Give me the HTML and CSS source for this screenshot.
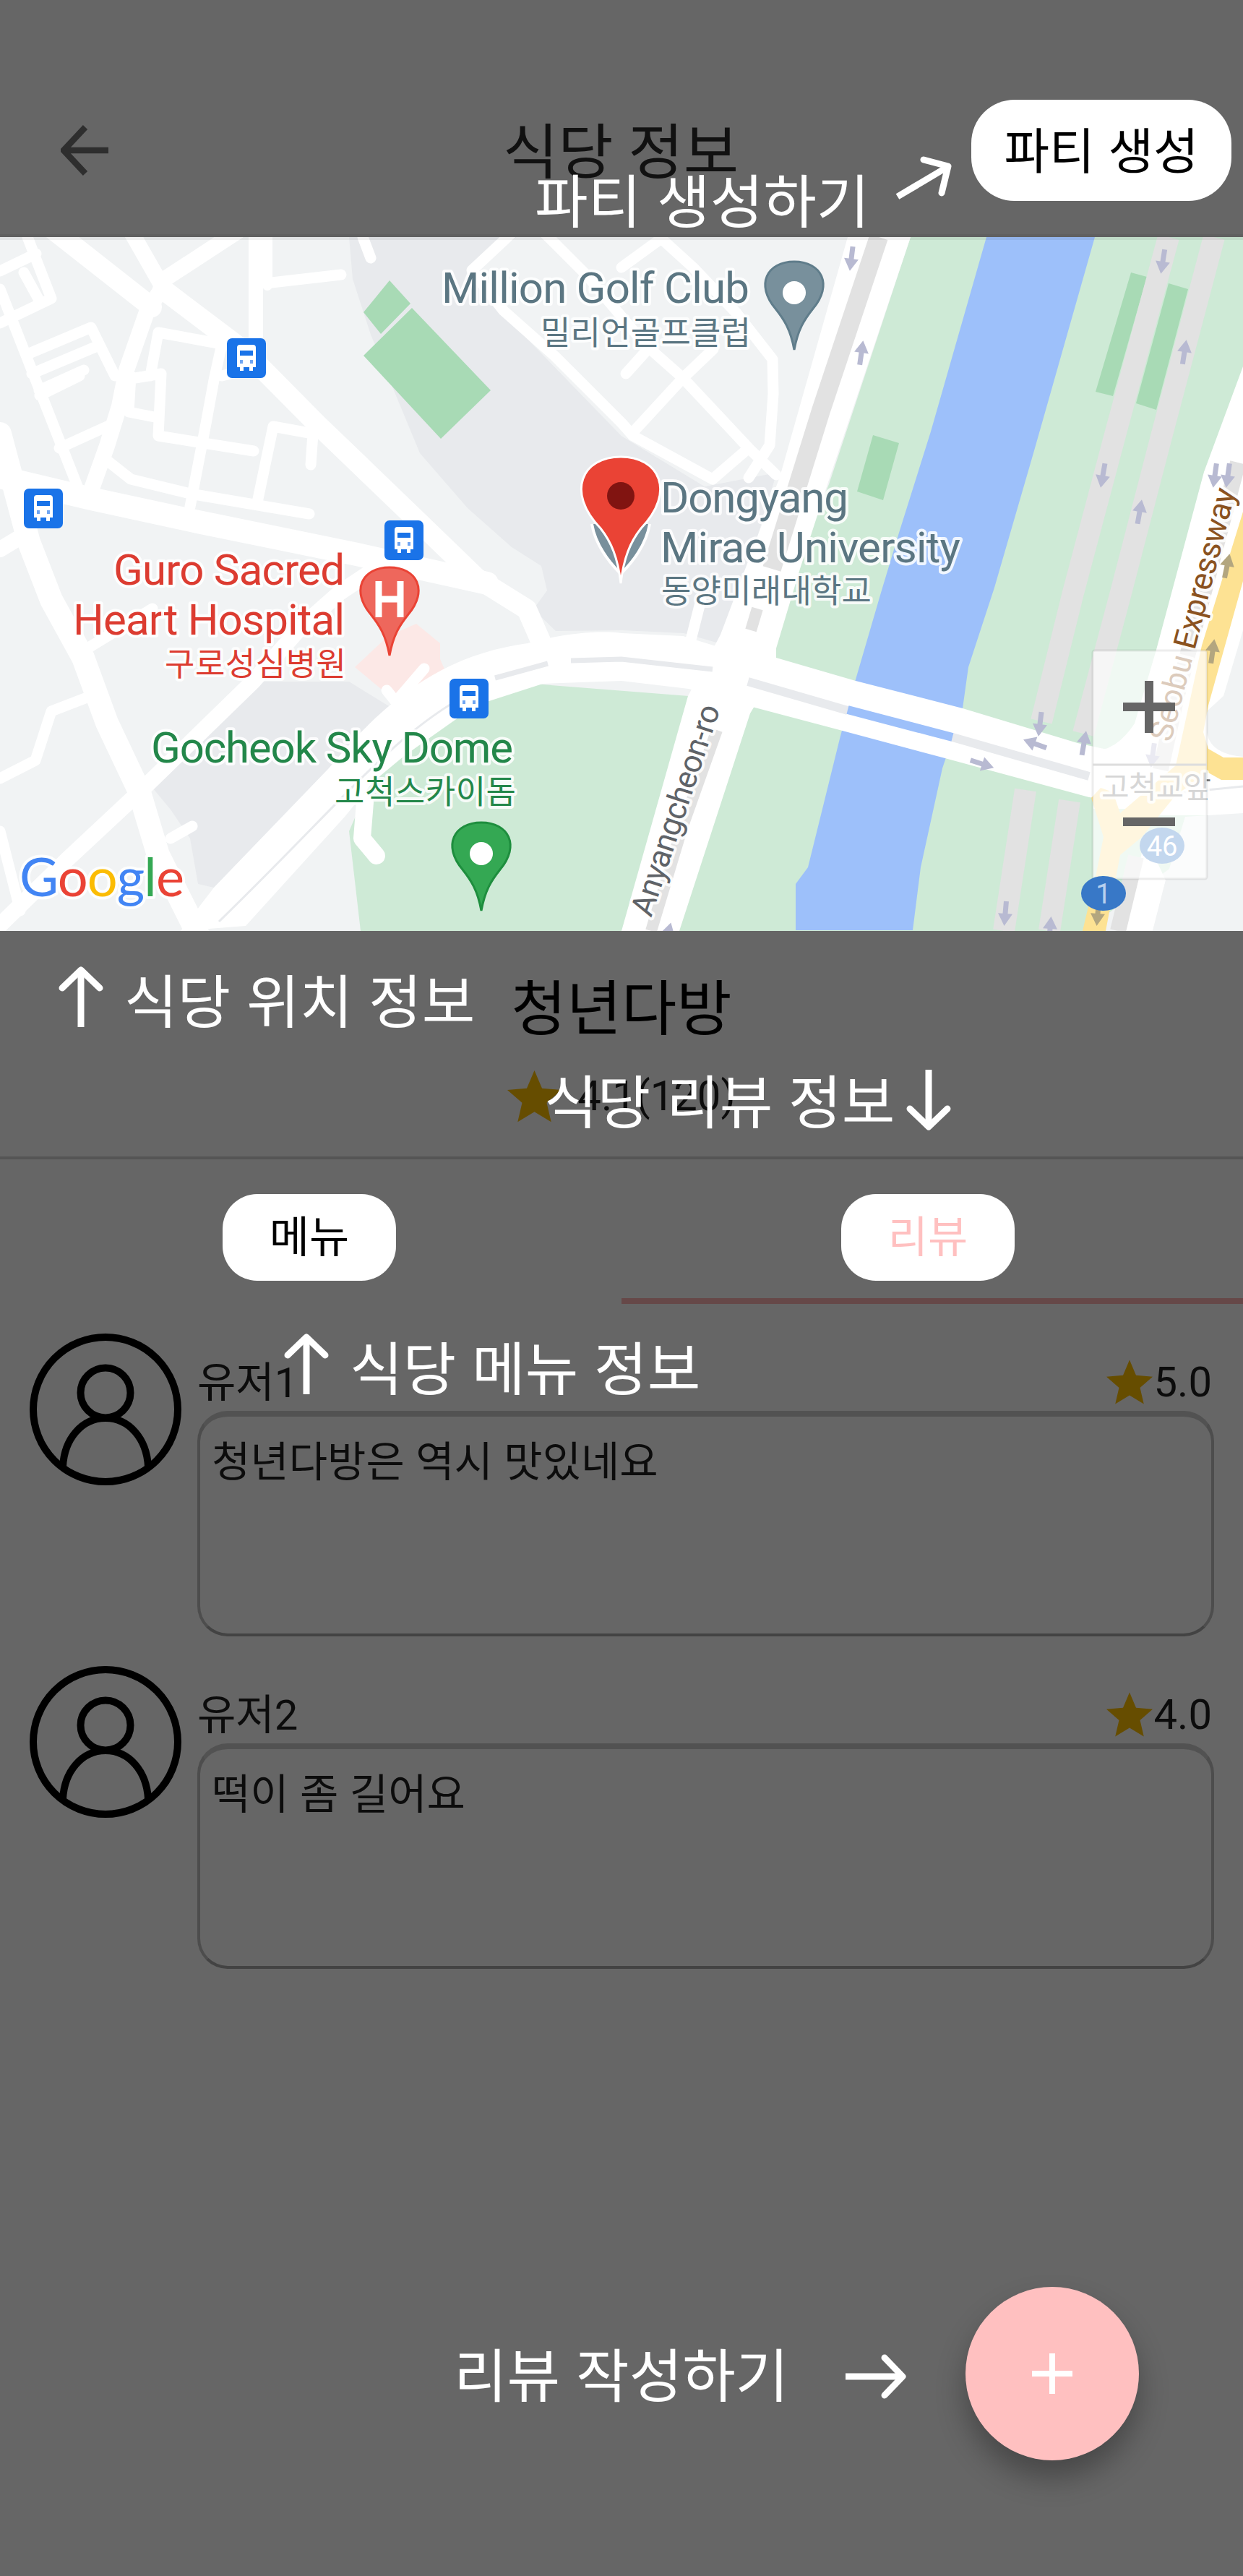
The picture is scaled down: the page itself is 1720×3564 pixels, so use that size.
FILE: index.html
```html
<!DOCTYPE html>
<html lang="ko">
<head>
<meta charset="utf-8">
<title>식당 정보</title>
<link rel="stylesheet" href="styles.css">
</head>
<body>
<svg class="defs" width="0" height="0">
  <defs>
    <symbol id="star" viewBox="2 2 20 19"><path d="M12 17.27 18.18 21l-1.64-7.03L22 9.24l-7.19-.61L12 2 9.19 8.63 2 9.24l5.46 4.73L5.82 21z"/></symbol>
    <symbol id="avatar" viewBox="0 0 212 212">
      <g fill="none" stroke="#000" stroke-width="10">
        <circle cx="106" cy="106" r="100"/>
        <circle cx="106" cy="83" r="34.5"/>
        <path d="M47 185c2-38 26-67 59-67s57 29 59 67"/>
      </g>
    </symbol>
    <symbol id="arrow-up" viewBox="0 0 64 84">
      <path d="M32 84V8" stroke-width="9"/>
      <path d="M6 30 32 5l26 25" stroke-width="9" stroke-linecap="round" stroke-linejoin="round"/>
    </symbol>
  </defs>
</svg>

<div class="screen">
  <header class="app-bar">
    <svg class="back" viewBox="0 0 66 72"><path d="M66 36H6M34 4 4 36l30 32" fill="none" stroke="#2e2e2e" stroke-width="8.500"/></svg>
    <h1 class="title">식당 정보</h1>
    <button class="party">파티 생성</button>
  </header>

  <svg class="map" viewBox="0 328 1720 960">
    <defs>
      <g id="bus">
        <rect width="54" height="55" rx="7" fill="#1a73e8"/>
        <path d="M14 13q0-4 4-4h18q4 0 4 4v27h-4v5h-5v-5h-8v5h-5v-5h-4z" fill="#fff"/>
        <path d="M18 17h18v7H18z" fill="#1a73e8"/>
        <path d="M18 30h4v5h-4zM32 30h4v5h-4z" fill="#6fa5f2"/>
      </g>
      <path id="dir" d="M-3.500 17V0H-10L0-17 10 0H3.500V17z"/>
      <path id="pin" d="M0 0C-5-28-14-42-26-57-54-90-38-122 0-122S54-90 26-57C14-42 5-28 0 0z" stroke-width="3"/>
    </defs>
    <rect y="328" width="1720" height="960" fill="#f1f3f4"/>

    <g fill="#e8eaed">
      <path d="M590 328h125l-65 50 45 55 165 170 115 70 100-20-30 100-50 137-49-14-85-4-92 1-31-30 19-26-8-34-41-26-61-54-66-76-68-164-25-77-12-140 51-13 49-27z"/>
      <path d="M351 943h132l60 37-88 83-159 165-22-5-11-63-27-40-25-30z"/>
    </g>
    <path d="M715 328L650 378l45 55 165 170 115 70 105-20 93-325z" fill="#f1f3f4"/>
    <path d="M576 863l33 27v22l8 18-52 35-38-12-36-30 46-43z" fill="#fce8e6"/>
    <g fill="#ceead6">
      <path d="M483 1150l16 138h380l74-325-253-20-170 100z"/>
      <path d="M1260 328h460v800l-220 160H930l90-300 127-318z"/>
    </g>
    <g fill="#a8dab5">
      <path d="M539 388l29 32-41 42-24-30zM570 426l109 114-69 67-107-115z"/>
      <path d="M1208 602l36 11-22 79-36-12zM1565 377l22 6-47 165-24-6zM1617 392l27 8-44 167-28-9z"/>
    </g>
    <path d="M1365 328h150l-85 299-54 186-36 110-8 57-28 83-30 137-11 87h-162v-64l17-23 44-178 22-82 35-120 25-83 44-140z" fill="#9dc0fa"/>

    <g fill="none" stroke="#fff" stroke-linejoin="round" stroke-linecap="round">
      <g stroke-width="15">
        <path d="M751 320l60 60 82 97 52 46 91 97 38 37M713 318l-60 56 44 56 71 63 92 92 16 18 110 60 50-43M945 523l-70 76M945 523l42-40M866 517l27-30M860 370l55-40 44 40 60 63 50 64 1 48-5 71-29 45M956 885l14-55"/>
        <path d="M0 400l110 280M110 520l-55 27M38 490l88-37 33 67M44 517l88-37M54 540l62-28M38 328l33 85-71 34M0 375l50-24M33 377l22 40"/>
        <path d="M502 328l11 29M367 392l105-12M219 460l88 16-11 50-11 60-22 115M219 460l-11 60M181 524l42-7-4 86 132 21M181 520l-3 50 41 8M307 520l20-5M378 590l55 10-3 43M378 590l-22 105M148 637l33 26 82 20 165 28M148 590l-66 30"/>
        <path d="M0 1077l49-25 22-68 52-20M121 897l90-55M236 1160l30-17M0 1150l28 110M587 925l-36 42M535 955l16 20"/>
      </g>
      <path d="M181 320l44 77-22 35-28 80-10 50-17 55-25 70M329 320l-104 68" stroke-width="22"/>
      <path d="M354 325v145" stroke-width="20"/><path d="M370 325v70" stroke-width="14"/>
      <path d="M515 790l-45 30-53 47-66 75-77 75-77 75-105 98-92 90M0 760l40-24" stroke-width="22"/>
      <path d="M70 315l140 110M225 400l115 87 99 100 131 126 90 87 69 43 24 55" stroke-width="28"/>
      <path d="M0 660l126 30 148 32 220 45 180 40M0 600l40 150 31 80 44 80 33 90 44 93 27 90 55 110" stroke-width="32"/>
      <path d="M505 1110l-4 50 20 24" stroke-width="24"/>
    </g>

    <g fill="#fff">
      <path d="M250 1288l46-60 159-165c85-103 165-158 275-173 50-14 100-18 130-14l85 4 49 15 80 15 110 32 148 38 159 48 229 50v49l-213-24-203-55-142-38-121-32-88-25-93-11-109 4-93 30-99 70-42 35-40 49-137 151z"/>
      <path d="M1173 328h87l-115 342-38 117-33 110v30l-36 60-98 301h-80l92-325 45-85 82-218z"/>
      <path d="M1720 507l-54 146-66 246-30 102q-25 38-57 38v80h207V507z"/>
      <path d="M1590 1128h130v-50h-130zM1613 1218l-18 70h-40l30-130z"/>
    </g>
    <path d="M1720 872l-27 91-23 21v29q4 30 50 34zM1640 1130l80-5v163h-125l18-70z" fill="#f1f3f4"/>

    <g fill="none" stroke="#e2e2e2">
      <path d="M1216 328l-80 240-68 219" stroke-width="26"/>
      <path d="M1048 842l-9 30M992 1010l-48 135-43 143" stroke-width="16"/>
      <path d="M1617 328l-73 270-59 222-44 178M1419 1093l-30 195M1680 328l-74 280-55 212-52 195M1480 1108l-28 180" stroke-width="30"/>
      <path d="M1713 640l-50 190-35 135-22 100M1572 1185l-25 103" stroke-width="22"/>
    </g>
    <g fill="none" stroke="#e8eaed">
      <path d="M1035 943l138 40M1318 1020l189 54" stroke-width="12"/>
      <path d="M790 914l70-2 126 14M685 938l73-20" stroke-width="7"/>
      <path d="M658 955c-110 55-180 150-355 320M1600 1100l120-12" stroke-width="3"/>
    </g>
    <path d="M1173 982l145 38" stroke="#9dc0fa" stroke-width="12"/>

    <path d="M1720 708l-57 185-36 166-77 66-10-29-17-6-13 14 17 54-10 50-19 80h32l20-105 30-25 47-58 45-31 18 10h30v-31h-27l-21-12-7-23 7-37 48-172z" fill="#fde293"/>

    <g fill="#b8bad2">
      <use href="#dir" transform="translate(1178 358) rotate(187)"/>
      <use href="#dir" transform="translate(1192 488) rotate(8)"/>
      <use href="#dir" transform="translate(1609 362) rotate(189)"/>
      <use href="#dir" transform="translate(1639 487) rotate(9)"/>
      <use href="#dir" transform="translate(1526 658) rotate(190)"/>
      <use href="#dir" transform="translate(1577 708) rotate(10)"/>
      <use href="#dir" transform="translate(1681 658) rotate(188)"/>
      <use href="#dir" transform="translate(1699 658) rotate(188)"/>
      <use href="#dir" transform="translate(1439 1002) rotate(187)"/>
      <use href="#dir" transform="translate(1500 1028) rotate(10)"/>
      <use href="#dir" transform="translate(1432 1029) rotate(-70)"/>
      <use href="#dir" transform="translate(1359 1057) rotate(108)"/>
      <use href="#dir" transform="translate(1391 1264) rotate(185)"/>
      <use href="#dir" transform="translate(1453 1285) rotate(5)"/>
      <use href="#dir" transform="translate(924 1293) rotate(15)"/>
      <use href="#dir" transform="translate(1595 1045) rotate(188)"/>
      <g fill="#b3a67f">
        <use href="#dir" transform="translate(1698 783) rotate(12)"/>
        <use href="#dir" transform="translate(1678 901) rotate(8)"/>
        <use href="#dir" transform="translate(1519 1264) rotate(185)"/>
      </g>
    </g>

    <use href="#bus" x="314" y="468"/>
    <use href="#bus" x="33" y="676"/>
    <use href="#bus" x="532" y="720"/>
    <use href="#bus" x="622" y="939"/>

    <g class="road-label">
      <text transform="translate(901 1270) rotate(-71.700)" textLength="305" fill="#5f6368">Anyangcheon-ro</text>
      <text transform="translate(1620 1028) rotate(-75.500)" textLength="360" fill="#8a5220">Seobu Expressway</text>
    </g>
    <g class="ko" font-size="42"><text x="1524" y="1104" textLength="152" fill="#777">고척교앞</text></g>
    <ellipse cx="1608" cy="1170" rx="31" ry="25" fill="#3878c7"/>
    <text class="route" x="1608" y="1184">46</text>

    <g class="place">
      <g fill="#5b7682">
        <text x="611" y="419" textLength="426">Million Golf Club</text>
        <text x="914" y="709" textLength="260">Dongyang</text>
        <text x="914" y="778" textLength="415">Mirae University</text>
        <g class="ko"><text x="748" y="477" textLength="291">밀리언골프클럽</text><text x="915" y="834" textLength="291">동양미래대학교</text></g>
      </g>
      <g fill="#dc3c31">
        <text x="157" y="809" textLength="320">Guro Sacred</text>
        <text x="101" y="878" textLength="376">Heart Hospital</text>
        <g class="ko"><text x="228" y="935" textLength="251">구로성심병원</text></g>
      </g>
      <g fill="#23874a">
        <text x="209" y="1055" textLength="501">Gocheok Sky Dome</text>
        <g class="ko"><text x="463" y="1112" textLength="251">고척스카이돔</text></g>
      </g>
    </g>

    <use href="#pin" x="1099" y="484" fill="#78909c" stroke="#607d8b"/>
    <circle cx="1099" cy="405" r="16" fill="#fff"/>
    <use href="#pin" x="666" y="1260" fill="#34a853" stroke="#1e8e3e"/>
    <circle cx="666" cy="1181" r="16" fill="#fff"/>
    <use href="#pin" x="539" y="907" fill="#ee675c" stroke="#ea4335"/>
    <path d="M524 804v50M554 804v50M524 829h30" stroke="#fff" stroke-width="9"/>
    <path d="M819 725q6 35 40 69 34-34 40-69" fill="#78909c" stroke="#fff" stroke-width="4"/>
    <path d="M859 807C855 772 846 750 831 731 782 680 806 632 859 632s77 48 28 99C872 750 863 772 859 807z" fill="#ea4335" stroke="#fff" stroke-width="3"/>
    <circle cx="859" cy="686" r="19" fill="#811411"/>

    <text class="google" x="27" y="1240" textLength="228"><tspan fill="#4285f4">G</tspan><tspan fill="#ea4335">o</tspan><tspan fill="#fbbc04">o</tspan><tspan fill="#4285f4">g</tspan><tspan fill="#34a853">l</tspan><tspan fill="#ea4335">e</tspan></text>

    <rect class="zoom" x="1512" y="900" width="158" height="316" rx="3"/>
    <path d="M1512 1058h158" stroke="#ddd" stroke-width="3"/>
    <path d="M1554 978h72M1590 942v72M1554 1137h72" stroke="#666" stroke-width="12"/>
    <ellipse cx="1527" cy="1236" rx="31" ry="24" fill="#3878c7"/>
    <text class="route dim" x="1527" y="1250">1</text>
    <path d="M0 330h1720" stroke="#000" stroke-opacity=".06" stroke-width="4"/>
  </svg>

  <section class="summary">
    <h2 class="name">청년다방</h2>
    <div class="rating"><svg class="star"><use href="#star"/></svg><span>4.1(120)</span></div>
  </section>

  <nav class="tabs">
    <div class="tab"><button class="chip">메뉴</button></div>
    <div class="tab active"><button class="chip">리뷰</button></div>
  </nav>

  <main class="reviews">
    <article class="review">
      <svg class="avatar"><use href="#avatar"/></svg>
      <div class="body">
        <div class="meta"><span>유저1</span><span class="score"><svg class="star"><use href="#star"/></svg>5.0</span></div>
        <p class="comment">청년다방은 역시 맛있네요</p>
      </div>
    </article>
    <article class="review">
      <svg class="avatar"><use href="#avatar"/></svg>
      <div class="body">
        <div class="meta"><span>유저2</span><span class="score"><svg class="star"><use href="#star"/></svg>4.0</span></div>
        <p class="comment">떡이 좀 길어요</p>
      </div>
    </article>
  </main>

  <!-- Coach marks laid over the dimmed screen -->
  <div class="hint hint-party">파티 생성하기
    <svg viewBox="0 0 80 64"><path d="M4 59 73 18" stroke-width="9"/><path d="M40 8l34 9-9 37" stroke-width="9" stroke-linecap="round" stroke-linejoin="round"/></svg>
  </div>
  <div class="hint hint-location"><svg><use href="#arrow-up"/></svg>식당 위치 정보</div>
  <div class="hint hint-review">식당 리뷰 정보<svg class="down"><use href="#arrow-up"/></svg></div>
  <div class="hint hint-menu"><svg><use href="#arrow-up"/></svg>식당 메뉴 정보</div>
  <div class="hint hint-write">리뷰 작성하기<svg class="right"><use href="#arrow-up"/></svg></div>
  <button class="fab"><svg viewBox="0 0 56 56"><path d="M0 28h56M28 0v56" stroke="#fff" stroke-width="8"/></svg></button>
</div>
</body>
</html>
```
FILE: styles.css
```css
* { box-sizing: border-box; margin: 0; padding: 0; }
body { background: #666; font-family: Roboto, "Noto Sans CJK KR", sans-serif; }
button { border: 0; font: inherit; }
svg { display: block; flex: none; }
.defs { position: absolute; }

.screen {
  position: relative;
  width: 1720px;
  height: 3564px;
  overflow: hidden;
  background: #666;
  color: #0c0c0c;
  font-size: 58px;
  line-height: 82px;
}

/* App bar */
.app-bar {
  display: grid;
  grid-template-columns: 1fr auto 1fr;
  align-items: center;
  height: 328px;
  padding: 96px 16px 0 84px;
  border-bottom: 4px solid #606060;
}
.back { width: 66px; height: 72px; margin-bottom: 4px; }
.title { font-size: 83px; font-weight: 400; line-height: 100px; color: #111; padding: 4px 70px 0 0; }
.party {
  justify-self: end;
  width: 360px;
  height: 140px;
  margin-bottom: 4px;
  padding-top: 5px;
  border-radius: 60px;
  background: #fff;
  color: #000;
  font-size: 68px;
  word-spacing: 2px;
}

/* Map */
.map { width: 1720px; height: 960px; font-family: Roboto, sans-serif; }
.map text { paint-order: stroke; stroke: #fff; stroke-opacity: .85; stroke-width: 8px; stroke-linejoin: round; }
.place { font-size: 60px; }
.map .ko { font-family: "Noto Sans CJK KR", sans-serif; }
.place .ko { font-size: 45px; }
.road-label { font-size: 44px; }
.map .route { font-size: 38px; fill: #fff; stroke: none; text-anchor: middle; }
.map .route.dim { fill: #b8d0ee; }
.google { font-family: Lato, sans-serif; font-size: 74px; }
.zoom { fill: #fff; fill-opacity: .7; stroke: #000; stroke-opacity: .07; stroke-width: 3; }

/* Restaurant summary */
.summary {
  display: flex;
  flex-direction: column;
  align-items: center;
  height: 316px;
  padding-top: 59px;
  border-bottom: 4px solid #555;
}
.name { font-size: 83px; font-weight: 400; line-height: 100px; color: #000; }
.rating { display: flex; align-items: center; gap: 22px; margin-top: 28px; }
.rating .star { width: 75px; height: 75px; }
.star { fill: #664d00; }

/* Tabs */
.tabs { display: grid; grid-template-columns: 1fr 1fr; height: 200px; }
.tab { display: flex; justify-content: center; padding-top: 48px; padding-right: 4px; }
.tab.active { border-bottom: 8px solid #664848; padding-right: 12px; }
.chip { width: 240px; height: 120px; padding-top: 1px; border-radius: 48px; background: #fff; color: #000; font-size: 60px; }
.tab.active .chip { color: #ffc0c0; }

/* Reviews */
.reviews { display: flex; flex-direction: column; gap: 148px; padding: 40px 40px 0; }
.review { display: flex; gap: 21px; height: 312px; }
.avatar { width: 212px; height: 212px; }
.body { flex: 1; margin-top: 28px; }
.meta { display: flex; justify-content: space-between; height: 80px; }
.score { display: flex; align-items: center; gap: 2px; margin-right: 3px; }
.score .star { width: 64px; height: 64px; }
.comment {
  height: 312px;
  padding: 22px 16px;
  border: 4px solid #4d4d4d;
  border-top: 8px solid #525252;
  border-bottom-color: #434343;
  border-radius: 42px;
  word-spacing: 1px;
}

/* Coach marks */
.hint {
  position: absolute;
  display: flex;
  align-items: center;
  color: #fff;
  font-size: 80px;
  line-height: 100px;
  word-spacing: 2px;
  white-space: nowrap;
}
.hint svg { width: 64px; height: 84px; fill: none; stroke: #fff; margin-bottom: 18px; }
.hint .down { transform: rotate(180deg); margin-bottom: 10px; }
.hint .right { transform: rotate(90deg); margin-bottom: 2px; }
.hint-party { left: 740px; top: 231px; }
.hint-party svg { position: absolute; left: 498px; top: -18px; width: 80px; height: 64px; }
.hint-location { left: 80px; top: 1337px; gap: 28px; }
.hint-review { left: 753px; top: 1477px; gap: 15px; }
.hint-menu { left: 392px; top: 1845px; gap: 28px; }
.hint-write { left: 628px; top: 3239px; gap: 89px; }

.fab {
  position: absolute;
  left: 1336px;
  top: 3164px;
  display: grid;
  place-items: center;
  width: 240px;
  height: 240px;
  border-radius: 50%;
  background: #ffc0c0;
  box-shadow: 0 24px 40px rgba(0, 0, 0, .3);
}
.fab svg { width: 56px; height: 56px; }
```
